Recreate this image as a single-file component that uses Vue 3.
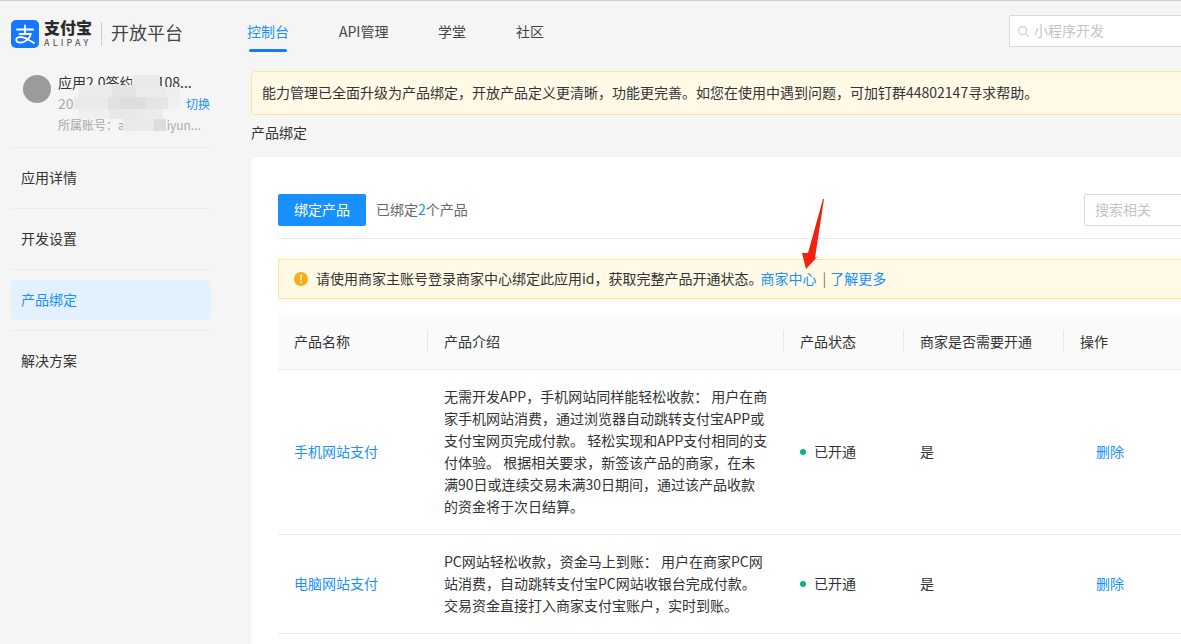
<script setup>
const tabs = [
  { label: '控制台', active: true },
  { label: 'API管理' },
  { label: '学堂' },
  { label: '社区' }
]
const menu = [
  { label: '应用详情' },
  { label: '开发设置' },
  { label: '产品绑定', active: true },
  { label: '解决方案' }
]
const columns = ['产品名称', '产品介绍', '产品状态', '商家是否需要开通', '操作']
const products = [
  {
    name: '手机网站支付',
    lines: [
      '无需开发APP，手机网站同样能轻松收款： 用户在商',
      '家手机网站消费，通过浏览器自动跳转支付宝APP或',
      '支付宝网页完成付款。 轻松实现和APP支付相同的支',
      '付体验。 根据相关要求，新签该产品的商家，在未',
      '满90日或连续交易未满30日期间，通过该产品收款',
      '的资金将于次日结算。'
    ]
  },
  {
    name: '电脑网站支付',
    lines: [
      'PC网站轻松收款，资金马上到账： 用户在商家PC网',
      '站消费，自动跳转支付宝PC网站收银台完成付款。',
      '交易资金直接打入商家支付宝账户，实时到账。'
    ]
  }
]
const mosaic = [
  [58, 0, 28, 11, '#e9e9ea'],
  [4, 10, 34, 12, '#ececec'], [38, 10, 24, 12, '#e4e4e5'], [62, 11, 30, 11, '#ebebec'], [92, 12, 14, 10, '#eeeeee'],
  [0, 22, 34, 12, '#eaeaea'], [34, 22, 12, 12, '#e2e2e3'], [46, 22, 26, 12, '#dededf'], [72, 22, 22, 12, '#e5e5e6'], [94, 22, 12, 12, '#f0f0f0'],
  [5, 34, 30, 10, '#efefef'], [35, 34, 28, 10, '#e8e8e8'], [63, 34, 26, 10, '#ebebeb'],
  [49, 44, 13, 12, '#e9e9e9'], [62, 44, 18, 12, '#eaeaea'], [80, 44, 12, 12, '#dcdcdc']
]
</script>

<template>
  <div class="page">
    <header class="topbar">
      <div class="brand">
        <svg class="logo" viewBox="0 0 28 28" aria-hidden="true">
          <rect width="28" height="28" rx="5" fill="#1677ff" />
          <g fill="none" stroke="#fff" stroke-width="1.800" stroke-linecap="round" stroke-linejoin="round">
            <path d="M6 9.500h16" />
            <path d="M14 5.500v8.500" />
            <path d="M8.500 14h11.500c-1.600 4.800-6 8.600-10.600 8.600-2.900 0-4.200-1.300-4.200-2.800 0-2.600 4-3.500 7.800-2.100 3 1.100 6.500 3.300 10 5.300" />
          </g>
        </svg>
        <div class="wordmark">
          <strong>支付宝</strong>
          <span>ALIPAY</span>
        </div>
        <i class="brand-line"></i>
        <span class="platform">开放平台</span>
      </div>
      <nav class="tabs">
        <a v-for="tab in tabs" :key="tab.label" class="tab" :class="{ active: tab.active }">
          <span>{{ tab.label }}</span>
        </a>
      </nav>
      <div class="top-search">
        <svg viewBox="0 0 14 14" aria-hidden="true">
          <circle cx="6" cy="6" r="4.300" fill="none" stroke="#ccc" stroke-width="1.200" />
          <path d="M9.200 9.200 12.500 12.500" stroke="#ccc" stroke-width="1.200" />
        </svg>
        <span>小程序开发</span>
      </div>
    </header>

    <div class="body">
      <aside class="sidebar">
        <div class="profile">
          <div class="avatar"></div>
          <div class="info">
            <div class="app-name">应用2.0签约202108...</div>
            <div class="app-id"><span>2021000000000</span><a>切换</a></div>
            <div class="account">所属账号：a*******liyun...</div>
          </div>
          <div class="mosaic">
            <i
              v-for="(c, idx) in mosaic"
              :key="idx"
              :style="{ left: c[0] + 'px', top: c[1] + 'px', width: c[2] + 'px', height: c[3] + 'px', background: c[4] }"
            ></i>
          </div>
        </div>
        <nav class="menu">
          <template v-for="item in menu" :key="item.label">
            <div class="menu-line"></div>
            <a class="menu-item" :class="{ active: item.active }">{{ item.label }}</a>
          </template>
        </nav>
      </aside>

      <main class="main">
        <div class="notice">能力管理已全面升级为产品绑定，开放产品定义更清晰，功能更完善。如您在使用中遇到问题，可加钉群44802147寻求帮助。</div>
        <div class="crumb">产品绑定</div>
        <section class="card">
          <div class="toolbar">
            <button class="bind-btn" type="button">绑定产品</button>
            <span class="count">已绑定<em>2</em>个产品</span>
            <div class="search">搜索相关</div>
          </div>
          <div class="tip">
            <svg viewBox="0 0 14 14" aria-hidden="true">
              <circle cx="7" cy="7" r="7" fill="#faad14" />
              <path d="M7 3.200v4.600" stroke="#fff" stroke-width="1.500" stroke-linecap="round" />
              <circle cx="7" cy="10.300" r="0.900" fill="#fff" />
            </svg>
            <span>请使用商家主账号登录商家中心绑定此应用id，获取完整产品开通状态。</span>
            <a class="tip-first">商家中心</a>
            <span class="tip-sep">|</span>
            <a>了解更多</a>
          </div>
          <div class="table">
            <div class="row head">
              <div v-for="col in columns" :key="col" class="th"><span>{{ col }}</span></div>
            </div>
            <div v-for="p in products" :key="p.name" class="row">
              <div class="td"><a>{{ p.name }}</a></div>
              <div class="td desc">
                <div v-for="line in p.lines" :key="line">{{ line }}</div>
              </div>
              <div class="td"><i class="dot"></i>已开通</div>
              <div class="td">是</div>
              <div class="td action"><a>删除</a></div>
            </div>
          </div>
        </section>
      </main>
    </div>

    <svg class="arrow" viewBox="0 0 30 76" aria-hidden="true">
      <polygon points="25,1 24,1 9,55 3,55 7,71 19,58 16,60" fill="#f5200f" />
    </svg>
  </div>
</template>

<style>
html, body { margin: 0; padding: 0; }
</style>

<style scoped>
.page {
  position: relative;
  width: 1181px;
  height: 644px;
  overflow: hidden;
  background: #f5f5f5;
  color: #333;
  font-family: "Noto Sans CJK SC", "Noto Sans", sans-serif;
  font-size: 14px;
  box-sizing: border-box;
  border-top: 1px solid #cfcfcf;
}
a { color: #1890ff; text-decoration: none; }

.topbar {
  display: flex;
  align-items: flex-start;
  width: 1300px;
  height: 62px;
}
.brand {
  display: flex;
  align-items: center;
  width: 236px;
  height: 28px;
  margin: 19px 0 0 11px;
  flex: none;
}
.logo { width: 28px; height: 28px; flex: none; }
.wordmark {
  display: flex;
  flex-direction: column;
  margin: -2px 0 0 5px;
  width: 48px;
  color: #2b2b2b;
}
.wordmark strong { font-size: 16px; line-height: 16px; font-weight: 900; white-space: nowrap; }
.wordmark span { font-size: 9px; line-height: 9px; margin-top: 3px; letter-spacing: 3.200px; color: #444; white-space: nowrap; }
.brand-line { width: 1px; height: 24px; background: #cfcfcf; margin-left: 9px; }
.platform { margin: -4px 0 0 9px; font-size: 18px; color: #444; white-space: nowrap; }

.tabs {
  display: grid;
  grid-template-columns: 92px 99px 78px 50px;
  padding-top: 19px;
  flex: none;
}
.tab { color: #444; display: block; }
.tab span {
  display: inline-block;
  line-height: 22px;
  height: 32px;
  white-space: nowrap;
}
.tab.active span {
  color: #1890ff;
  position: relative;
}
.tab.active span::after {
  content: "";
  position: absolute;
  left: 2px;
  right: 2px;
  bottom: 0;
  height: 3px;
  border-radius: 2px;
  background: #1677ff;
}
.top-search {
  margin: 14px 0 0 443px;
  width: 240px;
  height: 32px;
  box-sizing: border-box;
  border: 1px solid #d9d9d9;
  border-radius: 2px;
  background: #fff;
  display: flex;
  align-items: center;
  padding: 0 0 2px 7px;
  color: #c4c4c4;
  flex: none;
}
.top-search svg { width: 13px; height: 13px; margin: 2px 4px 0 0; }

.body { display: flex; align-items: flex-start; }
.sidebar { width: 251px; flex: none; }
.profile {
  position: relative;
  display: flex;
  padding: 9px 41px 12px 23px;
}
.avatar {
  width: 28px;
  height: 28px;
  border-radius: 50%;
  background: #9b9b9b;
  margin: 3px 7px 0 0;
  flex: none;
}
.info { width: 152px; flex: none; overflow: hidden; }
.app-name, .app-id, .account { line-height: 21px; white-space: nowrap; }
.app-id { display: flex; justify-content: space-between; color: #aaa; }
.app-id a { font-size: 12px; }
.account { font-size: 12px; color: #aaa; }
.mosaic {
  position: absolute;
  left: 74px;
  top: 12px;
  width: 108px;
  height: 58px;
  filter: blur(0.7px);
}
.mosaic i { position: absolute; display: block; }

.menu { width: 200px; margin-left: 11px; }
.menu-line { height: 1px; background: #ebebeb; }
.menu-item {
  display: block;
  height: 40px;
  line-height: 38px;
  margin: 10px 0;
  padding-left: 10px;
  color: #333;
  border-radius: 4px;
}
.menu-item.active { background: #e3f1ff; color: #1890ff; }

.main { width: 1000px; flex: none; padding-top: 8px; }
.notice {
  height: 44px;
  box-sizing: border-box;
  line-height: 40px;
  padding-left: 10px;
  background: #fff9e6;
  border: 1px solid #ffe58f;
  border-radius: 4px;
  white-space: nowrap;
}
.crumb { line-height: 22px; margin: 6px 0 14px; }
.card {
  background: #fff;
  border-radius: 8px 8px 0 0;
  padding: 37px 27px 0;
  height: 500px;
}
.toolbar {
  display: flex;
  align-items: center;
  height: 32px;
  padding-bottom: 12px;
  border-bottom: 1px solid #ebebeb;
}
.bind-btn {
  width: 88px;
  height: 32px;
  border: 0;
  border-radius: 2px;
  background: #1890ff;
  color: #fff;
  font: inherit;
  padding: 0 0 2px;
}
.count { margin: -2px 0 0 10px; color: #666; }
.count em { font-style: normal; color: #1890ff; }
.search {
  margin-left: auto;
  width: 140px;
  height: 32px;
  box-sizing: border-box;
  border: 1px solid #d9d9d9;
  border-radius: 2px;
  line-height: 28px;
  padding-left: 10px;
  color: #c4c4c4;
}
.tip {
  display: flex;
  align-items: center;
  height: 40px;
  box-sizing: border-box;
  margin-top: 20px;
  padding: 0 0 2px 15px;
  background: #fff9e6;
  border: 1px solid #ffe58f;
  white-space: nowrap;
}
.tip svg { width: 14px; height: 14px; margin: 2px 8px 0 0; flex: none; }
.tip-first { margin-left: -2px; }
.tip-sep { margin: 0 4px 0 6px; color: #8a6d3b; }

.table { margin-top: 16px; }
.row {
  display: grid;
  grid-template-columns: 149px 356px 120px 160px 1fr;
  border-bottom: 1px solid #ebebeb;
}
.head { height: 55px; box-sizing: border-box; background: #fafafa; align-items: center; padding-bottom: 2px; }
.th { padding-left: 16px; line-height: 22px; white-space: nowrap; }
.th + .th { padding-left: 0; }
.th + .th span { display: block; border-left: 1px solid #e8e8e8; padding-left: 16px; }
.td {
  display: flex;
  align-items: center;
  padding: 15px 16px 17px;
  line-height: 22px;
  white-space: nowrap;
}
.td + .td { padding-left: 17px; }
.desc { display: block; }
.dot {
  width: 6px;
  height: 6px;
  border-radius: 50%;
  background: #0cb57f;
  margin: 2px 8px 0 0;
  flex: none;
}
.td.action { padding-left: 33px; }

.arrow {
  position: absolute;
  left: 799px;
  top: 197px;
  width: 30px;
  height: 76px;
}
</style>
